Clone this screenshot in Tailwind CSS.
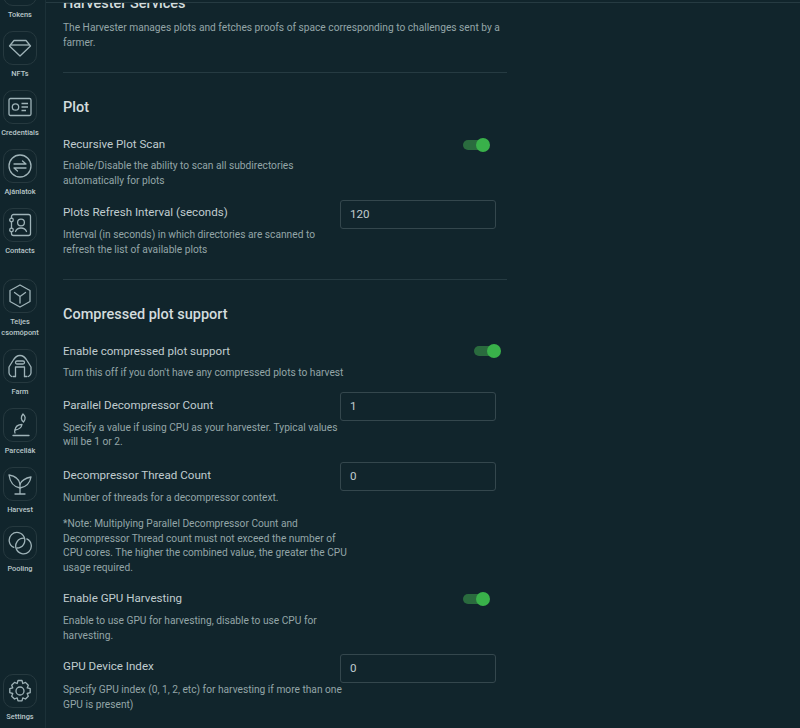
<!DOCTYPE html>
<html lang="en">
<head>
<meta charset="UTF-8">
<title>Harvester Settings</title>
<script src="https://cdn.jsdelivr.net/npm/@tailwindcss/browser@4"></script>
</head>
<body class="bg-[#11252c] font-['Roboto',sans-serif] overflow-hidden">
<div class="flex h-[728px] w-[800px] overflow-hidden">

  <!-- Sidebar -->
  <nav class="w-[46px] h-full shrink-0 pr-[5px] border-r border-[#1c3138] flex flex-col items-center text-[7.4px] leading-[11px] font-medium text-[#b9c7ca] text-center">
    <div class="flex flex-col items-center mt-[-28px] w-full">
      <a class="flex flex-col items-center h-[59px] w-full">
        <span class="w-[34px] h-[34px] rounded-[10px] border border-[#26393f]"></span>
        <span class="mt-[3px]">Tokens</span>
      </a>
      <a class="flex flex-col items-center h-[59px] w-full">
        <span class="w-[34px] h-[34px] rounded-[10px] border border-[#26393f] flex items-center justify-center">
          <svg class="w-6 h-6" viewBox="0 0 24 24" fill="none" stroke="#9fb3b8" stroke-width="1.3" stroke-linejoin="round"><path d="M6 4.500h12L22.500 10 12 20 1.500 10z"/><path d="M2.500 9h19"/></svg>
        </span>
        <span class="mt-[3px]">NFTs</span>
      </a>
      <a class="flex flex-col items-center h-[59px] w-full">
        <span class="w-[34px] h-[34px] rounded-[10px] border border-[#26393f] flex items-center justify-center">
          <svg class="w-6 h-6" viewBox="0 0 24 24" fill="none" stroke="#9fb3b8" stroke-width="1.300"><rect x="1" y="3.500" width="22" height="17" rx="1.500"/><circle cx="7.500" cy="12" r="3.200"/><path d="M13.500 8.500h6.500M13.500 12h6.500M13.500 15.500h4.500"/></svg>
        </span>
        <span class="mt-[3px] whitespace-nowrap">Credentials</span>
      </a>
      <a class="flex flex-col items-center h-[59px] w-full">
        <span class="w-[34px] h-[34px] rounded-[10px] border border-[#26393f] flex items-center justify-center">
          <svg class="w-6 h-6" viewBox="0 0 24 24" fill="none" stroke="#9fb3b8" stroke-width="1.300" stroke-linecap="round" stroke-linejoin="round"><circle cx="12" cy="12" r="11"/><path d="M6 10h12l-3.500-3M18 14H6l3.500 3"/></svg>
        </span>
        <span class="mt-[3px]">Ajánlatok</span>
      </a>
      <a class="flex flex-col items-center h-[59px] w-full">
        <span class="w-[34px] h-[34px] rounded-[10px] border border-[#26393f] flex items-center justify-center">
          <svg class="w-6 h-6" viewBox="0 0 24 24" fill="none" stroke="#9fb3b8" stroke-width="1.300" stroke-linecap="round" stroke-linejoin="round"><path d="M3.500 5V3.500a2 2 0 0 1 2-2h15a2 2 0 0 1 2 2v17a2 2 0 0 1-2 2h-15a2 2 0 0 1-2-2V19M3.500 9v6"/><circle cx="13" cy="9.500" r="3.400"/><path d="M7.500 18.500c1-2.500 3-3.500 5.500-3.500s4.500 1 5.500 3.500"/><circle cx="3.500" cy="7" r="1.800"/><circle cx="3.500" cy="17" r="1.800"/></svg>
        </span>
        <span class="mt-[3px]">Contacts</span>
      </a>
    </div>

    <div class="flex flex-col items-center mt-[12px] w-full">
      <a class="flex flex-col items-center h-[70px] w-full">
        <span class="w-[34px] h-[34px] rounded-[10px] border border-[#26393f] flex items-center justify-center">
          <svg class="w-6 h-6" viewBox="0 0 24 24" fill="none" stroke="#9fb3b8" stroke-width="1.300" stroke-linejoin="round" stroke-linecap="round"><path d="M12 1l10 5.500v11L12 23 2 17.500v-11z"/><path d="M6.500 8.500l5.500 4 5.500-4M12 12.500V19"/></svg>
        </span>
        <span class="mt-[3px] whitespace-nowrap">Teljes<br>csomópont</span>
      </a>
      <a class="flex flex-col items-center h-[59px] w-full">
        <span class="w-[34px] h-[34px] rounded-[10px] border border-[#26393f] flex items-center justify-center">
          <svg class="w-6 h-6" viewBox="0 0 24 24" fill="none" stroke="#9fb3b8" stroke-width="1.300" stroke-linecap="round" stroke-linejoin="round"><path d="M3.500 22.500c-1.500-1-2.500-2-2.500-3.500v-6L5 6.500C7 3 9 1.500 12 1.500S17 3 19 6.500l4 6.500v6c0 1.500-1 2.500-2.500 3.500"/><path d="M7.500 22.500V13h9v9.500"/><path d="M9 7h6a1.500 1.500 0 0 1 0 3H9a1.500 1.500 0 0 1 0-3z"/><path d="M5 22.500h2.500M16.500 22.500H19"/></svg>
        </span>
        <span class="mt-[3px]">Farm</span>
      </a>
      <a class="flex flex-col items-center h-[59px] w-full">
        <span class="w-[34px] h-[34px] rounded-[10px] border border-[#26393f] flex items-center justify-center">
          <svg class="w-6 h-6" viewBox="0 0 24 24" fill="none" stroke="#9fb3b8" stroke-width="1.300" stroke-linecap="round" stroke-linejoin="round"><path d="M15 1c2.500 2 3 5 .5 8-2.500-2-3-5-.5-8z"/><path d="M14 11.500c-.5 3-3 5-7 5.500.5-3.500 3-5.500 7-5.500z"/><path d="M7 17c-.5 1-.5 2 0 3"/><path d="M5 22.500h16"/></svg>
        </span>
        <span class="mt-[3px]">Parcellák</span>
      </a>
      <a class="flex flex-col items-center h-[59px] w-full">
        <span class="w-[34px] h-[34px] rounded-[10px] border border-[#26393f] flex items-center justify-center">
          <svg class="w-6 h-6" viewBox="0 0 24 24" fill="none" stroke="#9fb3b8" stroke-width="1.300" stroke-linecap="round" stroke-linejoin="round"><path d="M12 22V12M7 22h10"/><path d="M12 16C6 15 2 10 1 3c6 1 10 3 11 9"/><path d="M12 16c6-1 10-5 11-11-5 1-9 3-11 7"/></svg>
        </span>
        <span class="mt-[3px]">Harvest</span>
      </a>
      <a class="flex flex-col items-center h-[59px] w-full">
        <span class="w-[34px] h-[34px] rounded-[10px] border border-[#26393f] flex items-center justify-center">
          <svg class="w-6 h-6" viewBox="0 0 24 24" fill="none" stroke="#9fb3b8" stroke-width="1.300" stroke-linecap="round"><path d="M5.830 16.330A7.800 7.800 0 1 1 9 17"/><path d="M18.800 7.930A7.800 7.800 0 1 1 15.600 7.200"/></svg>
        </span>
        <span class="mt-[3px]">Pooling</span>
      </a>
    </div>

    <a class="flex flex-col items-center mt-auto mb-[6px] w-full">
      <span class="w-[34px] h-[34px] rounded-[10px] border border-[#26393f] flex items-center justify-center">
        <svg class="w-6 h-6" viewBox="0 0 24 24" fill="none" stroke="#9fb3b8" stroke-width="1.300" stroke-linejoin="round"><circle cx="12" cy="12" r="4"/><path d="M10 1.500h4l.8 3 2.700-1.100 2.800 2.800-1.100 2.700 3 .8v4l-3 .8 1.100 2.700-2.800 2.800-2.700-1.100-.8 3h-4l-.8-3-2.700 1.100-2.800-2.800 1.100-2.700-3-.8v-4l3-.8L3.700 6.200l2.800-2.800 2.700 1.100z"/></svg>
      </span>
      <span class="mt-[3px]">Settings</span>
    </a>
  </nav>

  <!-- Settings content, scrolled under the top bar edge -->
  <div class="flex-1 h-full flex flex-col">
    <div class="h-[3px] shrink-0 border-b border-[#263b42]"></div>
    <div class="flex-1 overflow-hidden">
      <main class="ml-[17px] w-[444px] mt-[-9px] text-[#c5d0d2]">
        <h2 class="text-[14.500px] leading-[20px] font-medium text-[#d3dcdd]">Harvester Services</h2>
        <p class="mt-[7px] text-[10.200px] leading-[14.500px] text-[#94a5a8]">The Harvester manages plots and fetches proofs of space corresponding to challenges sent by a farmer.</p>
        <hr class="mt-[22px] border-[#263b42]">

        <h2 class="mt-[25px] text-[14.500px] leading-[20px] font-medium text-[#d3dcdd]">Plot</h2>
        <div class="mt-[18px] flex">
          <div class="w-[277px]">
            <h3 class="text-[11.600px] leading-[16px] text-[#c0cccf]">Recursive Plot Scan</h3>
            <p class="mt-[7px] w-[286px] text-[10.200px] leading-[14.500px] text-[#94a5a8]">Enable/Disable the ability to scan all subdirectories automatically for plots</p>
          </div>
          <div class="ml-[123px] mt-[4px] relative w-[26px] h-[10px] rounded-full bg-[#2a6b3e]">
            <span class="absolute right-[-1px] top-[-2px] w-[14px] h-[14px] rounded-full bg-[#39b14a]"></span>
          </div>
        </div>
        <div class="mt-[16px] flex">
          <div class="w-[277px]">
            <h3 class="text-[11.600px] leading-[16px] text-[#c0cccf]">Plots Refresh Interval (seconds)</h3>
            <p class="mt-[8px] w-[286px] text-[10.200px] leading-[14.500px] text-[#94a5a8]">Interval (in seconds) in which directories are scanned to refresh the list of available plots</p>
          </div>
          <div class="mt-[-4px] w-[156px] h-[29px] rounded-[3px] border border-[#34474d] pl-[9px] text-[11.600px] leading-[27px] text-[#c0cccf]">120</div>
        </div>
        <hr class="mt-[22px] border-[#263b42]">

        <h2 class="mt-[25px] text-[14.500px] leading-[20px] font-medium text-[#d3dcdd]">Compressed plot support</h2>
        <div class="mt-[18px] flex">
          <div class="w-[411px]">
            <h3 class="text-[11.600px] leading-[16px] text-[#c0cccf]">Enable compressed plot support</h3>
            <p class="mt-[7px] text-[10.200px] leading-[14.500px] text-[#94a5a8]">Turn this off if you don't have any compressed plots to harvest</p>
          </div>
          <div class="mt-[3px] relative w-[26px] h-[10px] rounded-full bg-[#2a6b3e]">
            <span class="absolute right-[-1px] top-[-2px] w-[14px] h-[14px] rounded-full bg-[#39b14a]"></span>
          </div>
        </div>
        <div class="mt-[16px] flex">
          <div class="w-[277px]">
            <h3 class="text-[11.600px] leading-[16px] text-[#c0cccf]">Parallel Decompressor Count</h3>
            <p class="mt-[8px] w-[286px] text-[10.200px] leading-[14.500px] text-[#94a5a8]">Specify a value if using CPU as your harvester. Typical values will be 1 or 2.</p>
          </div>
          <div class="mt-[-5px] w-[156px] h-[29px] rounded-[3px] border border-[#34474d] pl-[9px] text-[11.600px] leading-[27px] text-[#c0cccf]">1</div>
        </div>
        <div class="mt-[17px] flex">
          <div class="w-[277px]">
            <h3 class="text-[11.600px] leading-[16px] text-[#c0cccf]">Decompressor Thread Count</h3>
            <p class="mt-[8px] w-[286px] text-[10.200px] leading-[14.500px] text-[#94a5a8]">Number of threads for a decompressor context.</p>
            <p class="mt-[12px] w-[286px] text-[10.200px] leading-[14.500px] text-[#94a5a8]">*Note: Multiplying Parallel Decompressor Count and Decompressor Thread count must not exceed the number of CPU cores. The higher the combined value, the greater the CPU usage required.</p>
          </div>
          <div class="mt-[-5px] w-[156px] h-[29px] rounded-[3px] border border-[#34474d] pl-[9px] text-[11.600px] leading-[27px] text-[#c0cccf]">0</div>
        </div>
        <div class="mt-[15px] flex">
          <div class="w-[277px]">
            <h3 class="text-[11.600px] leading-[16px] text-[#c0cccf]">Enable GPU Harvesting</h3>
            <p class="mt-[8px] w-[286px] text-[10.200px] leading-[14.500px] text-[#94a5a8]">Enable to use GPU for harvesting, disable to use CPU for harvesting.</p>
          </div>
          <div class="ml-[123px] mt-[4px] relative w-[26px] h-[10px] rounded-full bg-[#2a6b3e]">
            <span class="absolute right-[-1px] top-[-2px] w-[14px] h-[14px] rounded-full bg-[#39b14a]"></span>
          </div>
        </div>
        <div class="mt-[15px] flex">
          <div class="w-[277px]">
            <h3 class="text-[11.600px] leading-[16px] text-[#c0cccf]">GPU Device Index</h3>
            <p class="mt-[9px] w-[286px] text-[10.200px] leading-[14.500px] text-[#94a5a8]">Specify GPU index (0, 1, 2, etc) for harvesting if more than one GPU is present)</p>
          </div>
          <div class="mt-[-4px] w-[156px] h-[29px] rounded-[3px] border border-[#34474d] pl-[9px] text-[11.600px] leading-[27px] text-[#c0cccf]">0</div>
        </div>
      </main>
    </div>
  </div>
</div>
</body>
</html>
